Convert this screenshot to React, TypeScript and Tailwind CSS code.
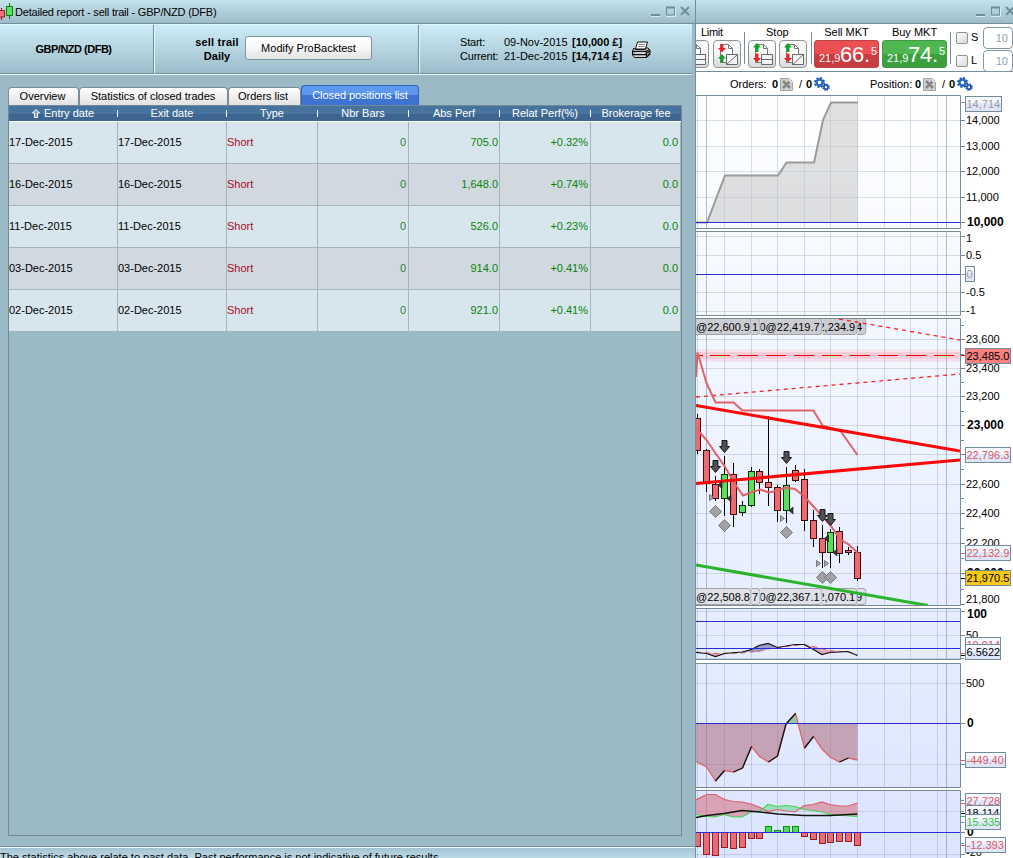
import React from 'react';

const columns = [
  { label: 'Entry date', width: 'w-[109px]' },
  { label: 'Exit date', width: 'w-[109px]' },
  { label: 'Type', width: 'w-[91px]' },
  { label: 'Nbr Bars', width: 'w-[91px]' },
  { label: 'Abs Perf', width: 'w-[91px]' },
  { label: 'Relat Perf(%)', width: 'w-[91px]' },
  { label: 'Brokerage fee', width: 'w-[90px]' },
];

const positions = [
  { date: '17-Dec-2015', abs: '705.0', relat: '+0.32%' },
  { date: '16-Dec-2015', abs: '1,648.0', relat: '+0.74%' },
  { date: '11-Dec-2015', abs: '526.0', relat: '+0.23%' },
  { date: '03-Dec-2015', abs: '914.0', relat: '+0.41%' },
  { date: '02-Dec-2015', abs: '921.0', relat: '+0.41%' },
];

const gridX = [697.5, 706.5, 724.5, 751.5, 777.5, 804.5, 830.5, 857.5, 884.5, 910.5, 937.5, 946.5];

// x, high, low, body top, body bottom, rising
const candles: [number, number, number, number, number, boolean][] = [
  [697.5, 414, 454, 418.5, 450.5, false],
  [706.5, 449, 492, 450.5, 483.5, false],
  [715.5, 476, 501, 484.5, 498.5, false],
  [724.5, 456, 516, 474.5, 498.5, true],
  [733.5, 463, 527, 474.5, 514.5, false],
  [742.5, 501, 516, 505.5, 512.5, true],
  [751.5, 467, 507, 471.5, 505.5, true],
  [759.5, 469, 494, 471.5, 482.5, false],
  [768.5, 416, 506, 482.5, 487.5, false],
  [777.5, 485, 522, 487.5, 510.5, false],
  [786.5, 467, 523, 485.5, 510.5, true],
  [795.5, 465, 482, 470.5, 480.5, false],
  [804.5, 469, 531, 479.5, 520.5, false],
  [813.5, 510, 547, 520.5, 538.5, false],
  [822.5, 525, 568, 538.5, 552.5, false],
  [830.5, 529, 568, 532.5, 552.5, true],
  [839.5, 527, 563, 531.5, 553.5, false],
  [848.5, 547, 555, 550.5, 552.5, false],
  [857.5, 546, 581, 552.5, 578.5, false],
];

const bars: [number, number][] = [
  [697.5, 846.5], [706.5, 854.5], [715.5, 855.5], [724.5, 847.5], [733.5, 848.5], [742.5, 847.5],
  [751.5, 838.5], [759.5, 838.5], [768.5, 826.5], [777.5, 830.5], [786.5, 826.5], [795.5, 826.5],
  [804.5, 836.5], [813.5, 839.5], [822.5, 843.5], [830.5, 842.5], [839.5, 841.5], [848.5, 841.5], [857.5, 845.5],
];

const momentum: [number, number][] = [
  [696, 761.5], [706.5, 767], [715.5, 781], [724.5, 770.5], [733.5, 772], [742.5, 768], [751.5, 746.5],
  [759.5, 756.5], [768.5, 762], [777.5, 756], [786, 724], [795.5, 713.5], [804.5, 748], [813.5, 736.5],
  [822, 749], [830, 757], [839.5, 762], [848.5, 758], [857.5, 760],
];

const WindowButtons = () => (
  <svg width="42" height="12" viewBox="0 0 42 12" fill="none" className="mb-px shrink-0">
    <path d="M1 11.5h9M16 11.5h9.5v-9M31 11l8-8" stroke="#d9edf4" />
    <path d="M1 10h9" stroke="#6d8e9b" strokeWidth="2" />
    <path d="M16.5 2.5h8v7.5h-8z" stroke="#6d8e9b" />
    <path d="M16 2.5h9" stroke="#6d8e9b" strokeWidth="2" />
    <path d="M31 2l8 8M39 2l-8 8" stroke="#6d8e9b" strokeWidth="2" />
  </svg>
);

const Printer = () => (
  <svg width="19" height="17" viewBox="0 0 19 17">
    <path d="M5.5 1h10l-2 7h-10z" fill="#fff" stroke="#111" />
    <path d="M7 3.5h6M6.5 5.5h6" stroke="#888" />
    <path d="M2 7l-1.500 3v4l2 2.500h12l3.500-3v-4.500l-2-2h-2l-.5 1.500h-10z" fill="#d5d5d5" stroke="#111" />
    <path d="M1 10.500h13l3.500-2M1 13.500h13M14.500 10.500v6M15.500 12l2.500-2M15.500 14.500l2.500-2" stroke="#111" strokeWidth="1.300" fill="none" />
    <path d="M3 12h10" stroke="#fff" />
  </svg>
);

const Gears = () => (
  <svg width="16" height="14" viewBox="0 0 16 14" fill="none">
    <circle cx="5.500" cy="5.500" r="4.500" stroke="#1855a5" strokeWidth="2" strokeDasharray="2 1.530" />
    <circle cx="5.500" cy="5.500" r="3" stroke="#2368c4" strokeWidth="2.400" />
    <circle cx="12" cy="10.200" r="2.900" stroke="#123f91" strokeWidth="1.500" strokeDasharray="1.500 .78" />
    <circle cx="12" cy="10.200" r="1.900" stroke="#1e5cb8" strokeWidth="1.500" />
  </svg>
);

const CancelOrder = () => (
  <svg width="13" height="13" viewBox="0 0 13 13">
    <path d="M.5.5h9l3 3v9H.5z" fill="#d0d0d0" stroke="#a4a4a4" />
    <path d="M3 3l7 7M10 3l-7 7" stroke="#858585" strokeWidth="2.500" />
    <path d="M9.500 0v3.500H13" fill="none" stroke="#eee" />
  </svg>
);

const OrderIcon = ({ mode, split }: { mode: 'limit' | 'stop'; split?: boolean }) => (
  <div className="h-7 w-7 shrink-0 rounded-[4px] border border-[#8e9496] bg-gradient-to-b from-white via-[#f2f2f2] to-[#d9d9d9]">
    <svg width="26" height="26" viewBox="0 0 26 26">
      <path d="M6.500 3.500h8l4 4v14h-12z" fill="#fff" stroke="#777" />
      <path d="M14.500 3.500v4h4" fill="none" stroke="#777" />
      <path d="M12.500 13.500h11v10h-11z" fill="#f4f4f4" stroke="#6b6b6b" />
      {split ? <path d="M12.500 23.500l11-10" stroke="#6b6b6b" /> : <path d="M12.500 18.500h11" stroke="#6b6b6b" />}
      {mode === 'limit' ? (
        <>
          <path d="M6.500 3h3v4h2.500L8 11.500 4 7h2.500z" fill="#f5202a" />
          <path d="M8 13l4 4.500H9.500v4h-3v-4H4z" fill="#14a326" />
        </>
      ) : (
        <>
          <path d="M8 2l4 4.500H9.500V11h-3V6.500H4z" fill="#14a326" />
          <path d="M6.500 12.500h3v4.500h2.500L8 21.500 4 17h2.500z" fill="#f5202a" />
        </>
      )}
    </svg>
  </div>
);

const Quote = ({ title, big, small, color }: { title: string; big: string; small: string; color: string }) => (
  <div className="flex w-[65px] shrink-0 flex-col items-center">
    <span className="h-[14px] leading-[12px]">{title}</span>
    <div className={`flex h-7 w-[65px] rounded-[3px] border pl-1 text-white ${color}`}>
      <span className="w-[21px] pt-[11px] leading-[13px]">21,9</span>
      <span className="w-[31px] text-[22px] leading-[27px] tracking-[-0.3px]">{big}.</span>
      <span className="pt-[4px] leading-[12px]">{small}</span>
    </div>
  </div>
);

// Every panel keeps the shared price/time coordinates through its viewBox.
const Panel = ({ top, height, lines, children, axis }: {
  top: number; height: number; lines: number[]; children: React.ReactNode; axis: React.ReactNode;
}) => (
  <svg width="317" height={height + 3} viewBox={`696 ${top} 317 ${height + 3}`} className="block shrink-0" fontFamily="Liberation Sans" fontSize="11">
    <defs>
      <linearGradient id={`bg${top}`} gradientUnits="userSpaceOnUse" x1="0" y1="95" x2="0" y2="858">
        <stop offset="0" stopColor="#ffffff" />
        <stop offset=".3" stopColor="#f3f7ff" />
        <stop offset="1" stopColor="#dbe5ff" />
      </linearGradient>
      <clipPath id={`plot${top}`}><rect x="696" y={top + 1} width="264" height={height - 2} /></clipPath>
    </defs>
    <rect x="694.5" y={top + 0.5} width="266" height={height - 1} fill={`url(#bg${top})`} />
    <g clipPath={`url(#plot${top})`}>
      {gridX.map(x => (
        <path key={x} d={`M${x} ${top}v${height}`} stroke={x === 706.5 || x === 946.5 ? '#6c7aa8' : '#7486a0'} strokeOpacity={x === 706.5 || x === 946.5 ? 0.5 : 0.27} />
      ))}
      {lines.map(y => <path key={y} d={`M696 ${y}h264`} stroke="#7486a0" strokeOpacity=".25" />)}
      {children}
    </g>
    <path d={`M696 ${top + 0.5}h264.5v${height - 1}H696`} fill="none" stroke="#738c98" />
    {axis}
  </svg>
);

const Tick = ({ y, label, bold, ty, color = '#738c98' }: { y: number; label?: string; bold?: boolean; ty?: number; color?: string }) => (
  <>
    <path d={`M961 ${y}h${label || bold ? 4 : 3}`} stroke={color} />
    {label && (
      <text x={bold ? 967 : 966} y={Math.floor(ty ?? y) + 4} fontWeight={bold ? 700 : 400} fontSize={bold ? 12 : 11} fill="#000">{label}</text>
    )}
  </>
);

const Badge = ({ y, label, width, color, fill = '#dfe6fa', tick, stroke = '#738c98', tickColor = color }: {
  y: number; label: string; width: number; color: string; fill?: string; tick?: number; stroke?: string; tickColor?: string;
}) => (
  <>
    {tick && <path d={`M961 ${tick}h4`} stroke={tickColor} />}
    <rect x="965.5" y={y + 0.5} width={width} height="15" fill={fill} stroke={stroke} />
    {fill === '#dfe6fa' && <rect x="966" y={y + 1} width={width - 1} height="6" fill="#f5f8ff" />}
    <text x="966.500" y={y + 12} fill={color}>{label}</text>
  </>
);

const BlueLine = ({ y }: { y: number }) => <path d={`M696 ${y}h264`} stroke="#2a2ed2" />;

const TagRow = ({ y, labels, fill }: { y: number; labels: string[]; fill: string }) => {
  const tags = [
    { x: 696, w: 55.5, dx: 0 },
    { x: 751.5, w: 9, dx: 0.5 },
    { x: 760.5, w: 62, dx: -1 },
    { x: 822.5, w: 35, dx: -4 },
    { x: 857.5, w: 9, dx: -1.5 },
  ];
  return (
    <>
      {tags.map((t, i) => (
        <svg key={t.x} x={t.x} y={y} width={t.w} height="17" overflow="hidden">
          <rect x="-6" y=".5" width={t.w + 5.5} height="16" rx="3" fill={fill} fillOpacity=".9" stroke="#a3a3a7" />
          <text x={t.dx} y="13" fontSize="11">{labels[i]}</text>
        </svg>
      ))}
    </>
  );
};

const DownArrow = ({ x, y }: { x: number; y: number }) => (
  <path d={`M${x - 2.5} ${y + 0.5}h5v6h2.500l-5 6l-5-6h2.500z`} fill="#515151" stroke="#161616" />
);
const Diamond = ({ x, y }: { x: number; y: number }) => (
  <path d={`M${x} ${y - 6}l6 6l-6 6l-6-6z`} fill="#a2a2a4" stroke="#7b7b7d" />
);

const ReportWindow = () => (
  <section className="flex h-[858px] w-[696px] shrink-0 flex-col overflow-hidden border-r border-[#718f9c] bg-[#9bbac6]">
    {/* Title bar */}
    <div className="flex h-6 shrink-0 items-center border-b border-[#718f9c] bg-gradient-to-b from-[#c5e3ee] to-[#9dbcc8]">
      <svg width="15" height="18" viewBox="0 0 15 18" className="mb-px shrink-0">
        <path d="M1.500 6v12" stroke="#a01820" />
        <path d="M-1 8.500h5.500v6.500H-1z" fill="#ee7379" stroke="#a01820" />
        <path d="M9.500 1v16" stroke="#087c12" />
        <path d="M6.500 4.500h6v9h-6z" fill="#55e660" stroke="#087c12" />
      </svg>
      <span className="flex-1 pt-px tracking-[-0.2px]">Detailed report - sell trail - GBP/NZD (DFB)</span>
      <div className="mr-[3px]"><WindowButtons /></div>
    </div>

    {/* Report summary */}
    <div className="mr-[3px] flex h-[51px] shrink-0 border-t border-b border-t-[#ddf5fb] border-b-[#eafafd] bg-gradient-to-b from-[#cdedf8] to-[#9cbbc8]">
      <div className="flex w-[154px] items-center justify-center border-r border-b border-[#718f9c] pr-[6px] font-bold tracking-[-0.5px]">
        GBP/NZD (DFB)
      </div>
      <div className="flex w-[265px] items-center border-r border-b border-l border-[#718f9c] border-l-[#e1f5fa] pl-[39px]">
        <div className="w-[46px] text-center font-bold leading-[14px]">
          <div className="tracking-[0.2px]">sell trail</div>
          <div>Daily</div>
        </div>
        <button className="mb-0.5 ml-[5px] h-6 w-[127px] rounded-[3px] border border-[#7c959f] bg-gradient-to-b from-white via-[#f7f7f7] via-50% to-[#e2e2e2]">
          Modify ProBacktest
        </button>
      </div>
      <div className="flex flex-1 items-center border-b border-l border-[#718f9c] border-l-[#e1f5fa] pl-[40px] leading-[14px]">
        <div className="w-[44px] tracking-[-0.2px]">
          <div>Start:</div>
          <div>Current:</div>
        </div>
        <div className="w-[68px]">
          <div>09-Nov-2015</div>
          <div>21-Dec-2015</div>
        </div>
        <div className="w-[60px] font-bold">
          <div>[10,000 £]</div>
          <div>[14,714 £]</div>
        </div>
        <Printer />
      </div>
    </div>

    {/* Tabs */}
    <div className="flex h-[30px] shrink-0 items-end pl-2">
      {[
        { name: 'Overview', width: 'w-[71px] pr-[2px]' },
        { name: 'Statistics of closed trades', width: 'w-[149px] pr-px' },
        { name: 'Orders list', width: 'w-[73px] pr-[3px]' },
      ].map(tab => (
        <div key={tab.name} className={`h-[18px] rounded-t-[4px] border border-b-0 border-[#788d96] bg-gradient-to-b from-white to-[#e1e1e1] text-center leading-[17px] ${tab.width}`}>
          {tab.name}
        </div>
      ))}
      <div className="h-5 w-[118px] rounded-t-[4px] border border-b-0 border-[#3467b2] bg-gradient-to-b from-[#5c98ee] from-50% to-[#3d74d2] to-50% text-center leading-[19px] tracking-[-0.08px] text-white">
        Closed positions list
      </div>
    </div>

    {/* Closed positions */}
    <div className="ml-2 h-[731px] w-[674px] shrink-0 border border-[#718996]">
      <div className="flex h-4 border-b border-white bg-gradient-to-b from-[#47739f] from-50% to-[#3d658f] to-50% text-white">
        {columns.map((c, i) => (
          <div key={c.label} className={`flex items-center ${c.width}`}>
            <div className="flex flex-1 items-center justify-center">
              {i === 0 && (
                <svg width="8" height="9" viewBox="0 0 8 9" className="mr-1">
                  <path d="M4 .5L7.500 4h-2v4.500h-3V4h-2z" fill="#80a1c4" stroke="#fff" />
                </svg>
              )}
              {c.label}
            </div>
            {i < 6 && <span className="h-[7px] w-px shrink-0 bg-white" />}
          </div>
        ))}
      </div>
      {positions.map((p, i) => (
        <div key={p.date} className={`flex h-[42px] items-center border-b border-[#a7b4ba] [&>div]:flex [&>div]:h-full [&>div]:items-center [&>div]:border-r [&>div]:border-[#a7b4ba] ${i % 2 ? 'bg-[#d0d9df]' : 'bg-[#d7e6ed]'}`}>
          <div className="w-[109px]">{p.date}</div>
          <div className="w-[109px]">{p.date}</div>
          <div className="w-[91px] text-[#a80d26]">Short</div>
          <div className="w-[91px] justify-end pr-[2px] text-[#2c8040]">0</div>
          <div className="w-[91px] justify-end pr-px text-[#07830b]">{p.abs}</div>
          <div className="w-[91px] justify-end pr-[2px] text-[#07830b]">{p.relat}</div>
          <div className="w-[90px] justify-end pr-[2px] text-[#07830b]">0.0</div>
        </div>
      ))}
    </div>

    {/* Disclaimer */}
    <div className="mt-[10px] h-[20px] shrink-0 border-t border-[#718f9c]">
      <div className="h-5 border-t border-[#eafafd] bg-gradient-to-b from-[#a5c4d2] to-[#d0edf7] pt-[2px] leading-[14px]">
        The statistics above relate to past data. Past performance is not indicative of future results.
      </div>
    </div>
  </section>
);

const TradingToolbar = () => (
  <div className="flex h-12 shrink-0 border-b border-[#718f9c] bg-white">
    <div className="w-[48px] shrink-0 overflow-hidden pt-[2px]">
      <div className="h-[14px] pl-[5px] leading-[12px] tracking-[-0.3px]">Limit</div>
      <div className="-ml-[15px] flex gap-1"><OrderIcon mode="limit" /><OrderIcon mode="limit" split /></div>
    </div>
    <div className="mt-2 h-8 w-px shrink-0 bg-[#718f9c]" />
    <div className="w-[66px] shrink-0 pt-[2px] pl-[3px]">
      <div className="h-[14px] pl-[18px] leading-[12px]">Stop</div>
      <div className="flex gap-[3px]"><OrderIcon mode="stop" /><OrderIcon mode="stop" split /></div>
    </div>
    <div className="mt-2 mr-[2px] h-8 w-px shrink-0 bg-[#718f9c]" />
    <div className="flex gap-[3px] pt-[2px]">
      <Quote title="Sell MKT" big="66" small="5" color="border-[#b94547] bg-linear-to-b from-[#ec4f51] from-50% to-[#c83b3e] to-50%" />
      <Quote title="Buy MKT" big="74" small="5" color="border-[#409845] bg-linear-to-b from-[#50b651] from-50% to-[#3b9f3e] to-50%" />
    </div>
    <div className="mt-2 ml-[3px] h-8 w-px shrink-0 bg-[#718f9c]" />
    <div className="ml-[5px] flex flex-col gap-[2px] pt-[3px]">
      {['S', 'L'].map(side => (
        <div key={side} className="flex h-[21px] items-center">
          <div className="h-3 w-3 shrink-0 rounded-[2px] border border-[#8c9497] bg-gradient-to-br from-white to-[#d8d8d8]" />
          <span className="w-[15px] pl-[3px]">{side}</span>
          <div className="h-[22px] w-[30px] shrink-0 rounded-[4px] border border-[#8296a0] pr-[4px] text-right leading-[20px] text-[#93a3ac]">10</div>
        </div>
      ))}
    </div>
  </div>
);

const ChartWindow = () => {
  const momentumPath = momentum.map(([x, y]) => `${x} ${y}`).join('L');
  return (
    <section className="flex h-[858px] w-[317px] shrink-0 flex-col overflow-hidden bg-white">
      <div className="flex h-6 shrink-0 items-center justify-end border-b border-[#718f9c] bg-gradient-to-b from-[#c5e3ee] to-[#9dbcc8]">
        <div className="-mr-[4px]"><WindowButtons /></div>
      </div>
      <TradingToolbar />
      <div className="flex h-[23px] shrink-0 items-center pt-px pl-[34px]">
        <span className="w-[42px]">Orders:</span>
        <b className="w-[8px]">0</b>
        <CancelOrder />
        <span className="w-[13px] pl-[6px]">/</span>
        <b className="w-[8px]">0</b>
        <Gears />
        <span className="ml-[40px] w-[45px]">Position:</span>
        <b className="w-[8px]">0</b>
        <CancelOrder />
        <span className="w-[13px] pl-[6px]">/</span>
        <b className="w-[8px]">0</b>
        <Gears />
      </div>

      {/* Equity */}
      <Panel top={95} height={134} lines={[120.5, 146.5, 171.5, 197.5]} axis={
        <>
          <Badge y={96} width={36} label="14,714" color="#9a9a9a" tick={102.5} />
          <Tick y={120.5} label="14,000" />
          <Tick y={146.5} label="13,000" />
          <Tick y={171.5} label="12,000" />
          <Tick y={197.5} label="11,000" />
          <Tick y={222.5} label="10,000" bold />
        </>
      }>
        <path d="M707 222.500L725 175.500H778L786.500 162.500H814L823 120L831 102.500H858V222.500z" fill="#c3c3c3" fillOpacity=".52" />
        <path d="M696 222.500H707L725 175.500H778L786.500 162.500H814L823 120L831 102.500H858" fill="none" stroke="#9b9b9b" strokeWidth="2" />
        <BlueLine y={222.5} />
      </Panel>

      {/* Exposure */}
      <div className="-mt-px -mb-px">
        <Panel top={231} height={85} lines={[236.5, 255.5, 292.5, 311.5]} axis={
          <>
            <Tick y={236.5} label="1" ty={238.5} />
            <Tick y={255.5} label="0.5" />
            <Tick y={292.5} label="-0.5" />
            <Tick y={311.5} label="-1" ty={310} />
            <Badge y={266} width={9} label="0" color="#9a9a9a" tick={274.5} />
          </>
        }>
          <BlueLine y={274.5} />
        </Panel>
      </div>

      {/* Price */}
      <Panel top={318} height={288} lines={[339.5, 368.5, 396.5, 425.5, 454.5, 484.5, 513.5, 543.5, 573.5]} axis={
        <>
          {[325.5, 354.5, 382.5, 411.5, 440.5, 469.5, 498.5, 528.5, 558.5, 589.5].map(y => <Tick key={y} y={y} />)}
          <Tick y={339.5} label="23,600" />
          <Tick y={368.5} label="23,400" />
          <Tick y={396.5} label="23,200" />
          <Tick y={425.5} label="23,000" bold />
          <Tick y={484.5} label="22,600" />
          <Tick y={513.5} label="22,400" />
          <Tick y={543.5} label="22,200" />
          <Tick y={573.5} label="22,000" bold />
          <Tick y={604.5} label="21,800" ty={599.5} />
          <Badge y={348} width={45} label="23,485.0" color="#000" fill="#f88080" tick={355.5} tickColor="#f60000" />
          <Badge y={447} width={45} label="22,796.3" color="#db5960" tick={454.5} />
          <Badge y={545} width={45} label="22,132.9" color="#db5960" tick={553.5} />
          <Badge y={570} width={45} label="21,970.5" color="#000" fill="#f9c819" tick={578.5} />
        </>
      }>
        <TagRow y={318} labels={['@22,600.9', '1', '0@22,419.7', '2,234.9', '4']} fill="#c8c8ce" />
        <path d="M839 319L960 340M696 397L960 374" stroke="#ff1e1e" strokeWidth="1.300" strokeDasharray="4 4" />
        <path d="M696 355.500h264" stroke="#ff6c7c" strokeWidth="13" strokeOpacity=".13" />
        <path d="M696 355.500h264" stroke="#ff6c7c" strokeWidth="7" strokeOpacity=".2" />
        <path d="M696 355.500h7M710 355.500h250" stroke="#f60000" strokeDasharray="20 8" />
        {candles.map(([x, high, low, top, bottom, rising]) => (
          <g key={x}>
            <path d={`M${x} ${high}V${low}`} stroke="#000" />
            <rect x={x - 3} y={top} width="6" height={bottom - top} fill={rising ? '#5bde58' : '#ea6c70'} stroke={rising ? '#06350a' : '#430b0e'} />
          </g>
        ))}
        <path d="M696 377L697.500 352.500L706.500 383L715.500 402.500H733.500L742.500 410.500H813.500L822.500 425.500L840.500 431L857.500 455M696 428L706.500 440L716 454L724.500 466L733 481L743 495.500L751 492.500L760 489.500L769 492.500L778 490.500L786 487.500L795 489L805 497L813 506L822 516L831 526L840 539L848 544L858 553" fill="none" stroke="#e06168" strokeWidth="2" />
        <TagRow y={588} labels={['@22,508.8', '7', '0@22,367.1', '2,070.1', '9']} fill="#dedee6" />
        <path d="M696 405.500L960 451M696 483.500L960 460" stroke="#fb0707" strokeWidth="3" />
        <path d="M696 565L928 605.500" stroke="#29b52b" strokeWidth="3" />
        {[[724.5, 440], [715.5, 460], [786.5, 451], [822.5, 509], [830.5, 513]].map(([x, y]) => <DownArrow key={x} x={x} y={y} />)}
        {[[715.5, 511.5], [724.5, 525.5], [786.5, 532.5], [822.5, 577.5], [830.5, 577.5]].map(([x, y]) => <Diamond key={x} x={x} y={y} />)}
        {[[718, 485], [727, 498.5], [789, 510.5], [824.5, 538.5], [833, 552.5]].map(([x, y]) => (
          <path key={x} d={`M${x} ${y}l4-3.500v7z`} fill="#333" stroke="#222" strokeWidth=".7" />
        ))}
        {[[709.5, 497.5], [780.5, 518.5], [816.5, 563.5], [824.5, 563.5]].map(([x, y]) => (
          <path key={x} d={`M${x} ${y - 3}v6l4-3z`} fill="#a8a8ac" stroke="#777" />
        ))}
      </Panel>

      {/* Oscillator */}
      <div className="-mt-px">
        <Panel top={608} height={52} lines={[611.5, 635.5, 658.5]} axis={
          <>
            <Tick y={611.5} label="100" bold ty={614.5} />
            <Tick y={635.5} label="50" />
            <Tick y={658.5} />
            <Badge y={637} width={35} label="10.914" color="#db5960" tick={653.5} />
            <Badge y={644} width={35} label="6.5622" color="#000" tick={655.5} />
          </>
        }>
          <path d="M742 652L751 649.500L759 645L768 643.500L777 647.500L768 649L759 652z" fill="#6770a5" fillOpacity=".6" />
          <path d="M706 653L715 656.500L724 653.500L715 653zM804 644.500L813 649.500L822 654.500L830 652.500L848 651.500L833 651L820 648z" fill="#df7f91" fillOpacity=".6" />
          <path d="M696 652L715 653.500L742 653L760 651L768 649L777 647.500L795 645.500L804 644.500L820 648L833 651L848 652L857 655" fill="none" stroke="#df5960" strokeDasharray="5 4" />
          <path d="M696 652.500L706.500 653.500L715.500 656.500L724.500 653.500L742 652L751.500 649.500L759 645.500L768 643.500L777.500 647.500L795 644.500H804L813.500 649.500L822 654.500L830 652.500L848 651.500L857.500 655.500" fill="none" stroke="#111" strokeWidth="1.200" />
          <BlueLine y={621.5} />
          <BlueLine y={648.5} />
        </Panel>
      </div>

      {/* Momentum */}
      <Panel top={663} height={125} lines={[683.5, 764.5]} axis={
        <>
          <Tick y={683.5} label="500" />
          <Tick y={723.5} label="0" bold />
          <Tick y={764.5} bold />
          <Badge y={752} width={40} label="-449.40" color="#db5960" tick={760.5} />
        </>
      }>
        <path d="M786.500 723.500L795.500 713.500L798 723.500z" fill="#98c5a8" />
        <path d={`M696 723.500L696 761.500L${momentum.slice(1, 10).map(p => p.join(' ')).join('L')}L786.500 723.500zM798 723.500L${momentum.slice(12).map(p => p.join(' ')).join('L')}V723.500z`} fill="#ac6978" fillOpacity=".55" />
        <path d={`M${momentumPath}`} fill="none" stroke="#e1636b" strokeWidth="1.300" />
        {momentum.slice(1).map(([x, y], i) => y < momentum[i][1] && (
          <path key={x} d={`M${momentum[i][0]} ${momentum[i][1]}L${x} ${y}`} stroke="#111" strokeWidth="1.300" />
        ))}
        <BlueLine y={723.5} />
      </Panel>

      {/* Directional movement */}
      <div className="-mt-px">
        <Panel top={790} height={80} lines={[811.5, 854.5]} axis={
          <>
            {[800.5, 811.5, 822.5, 843.5].map(y => <Tick key={y} y={y} />)}
            <Tick y={832.5} label="0" bold ty={832} />
            <Tick y={854.5} label="-20" ty={852.5} />
            <Badge y={793} width={35} label="27.728" color="#db5960" tick={803.5} />
            <Badge y={805} width={35} label="18.114" color="#000" tick={813.5} />
            <Badge y={814} width={35} label="15.335" color="#35c63e" tick={816.5} />
            <Badge y={837} width={40} label="-12.393" color="#db5960" tick={845.5} />
          </>
        }>
          <path d="M696 800L706.500 794.500H715.500L724.500 799.500L733 801.500L742 802L751 804L759 807L765 810L759 811L751 812L742 817H733L724 814.500L715 817L706 816.500L696 814.500zM799 810L804 805.500L813 804.500L822 802L830 804.500L839 806H848L857.500 803V816.500L830 814.500L822 812L804 809.500z" fill="#d97787" fillOpacity=".62" />
          <path d="M763 811L768 804.500L777 806.500L786 805.500L795 806.500L800 809L795 812L786 811L777 809.500L768 811.500z" fill="#8ed8af" fillOpacity=".8" />
          <path d="M696 800L706.500 794.500H715.500L724.500 799.500L733 801.500L742 802L751 804L759 807L768 811.500L777 809.500L786 811L795 812L804 805.500L813 804.500L822 802L830 804.500L839 806H848L857.500 803" fill="none" stroke="#dc5d66" strokeWidth="1.200" />
          <path d="M696 814.500L706 816.500L715 817L724 814.500L733 817H742L751 812L760 811L768 804.500L777 806.500L786 805.500L795 806.500L804 809.500L813 810.500L822 812L830 814.500L857.500 816.500" fill="none" stroke="#42d64d" strokeWidth="1.200" />
          <path d="M696 817.500L707 815.500L724 813.500L742 810.500L760 812L778 814L804 815.500H830L857.500 814" fill="none" stroke="#111" strokeWidth="1.500" />
          {bars.map(([x, y]) => (
            <rect key={x} x={x - 3} y={Math.min(y, 832.5)} width="6" height={Math.abs(y - 832.5)} fill={y < 832.5 ? '#50d95b' : '#e86d73'} stroke={y < 832.5 ? '#079010' : '#9c1920'} />
          ))}
          <BlueLine y={832.5} />
        </Panel>
      </div>
    </section>
  );
};

const App: React.FC = () => (
  <main className="flex h-[858px] w-[1013px] overflow-hidden whitespace-nowrap bg-white font-['Liberation_Sans',sans-serif] text-[11px] leading-[13px] text-black">
    <ReportWindow />
    <ChartWindow />
  </main>
);

export default App;
